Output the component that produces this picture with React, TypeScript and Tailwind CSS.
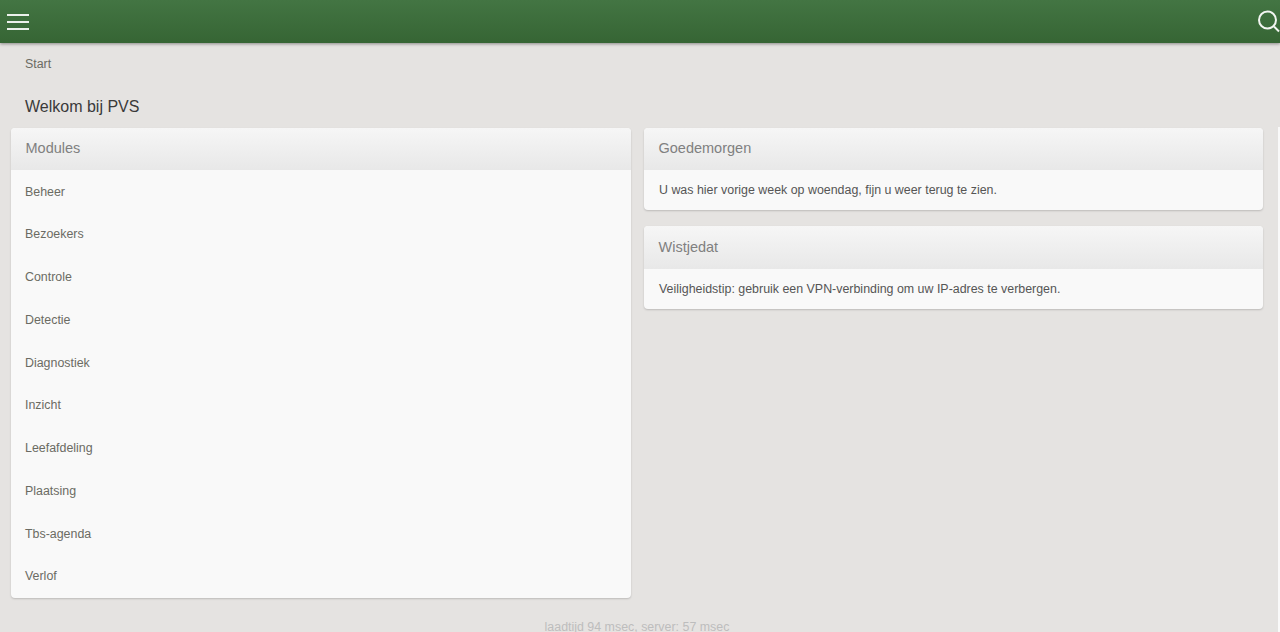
const modules = [
  'Beheer',
  'Bezoekers',
  'Controle',
  'Detectie',
  'Diagnostiek',
  'Inzicht',
  'Leefafdeling',
  'Plaatsing',
  'Tbs-agenda',
  'Verlof',
]

function Panel({ title, children }: { title: string; children: React.ReactNode }) {
  return (
    <div className="overflow-hidden rounded-[4px] bg-[#f9f9f9] shadow-[0_1px_2px_rgba(0,0,0,0.18)]">
      <div className="flex h-[42.5px] items-center bg-gradient-to-b from-[#f6f6f6] to-[#e8e8e8] px-[14.5px] pt-[1px] text-[14.5px] text-[#808080]">
        {title}
      </div>
      {children}
    </div>
  )
}

export default function App() {
  return (
    <div className="flex h-[632px] flex-col overflow-hidden bg-[#e5e3e1] font-['Liberation_Sans',Arial,sans-serif]">
      {/* Top bar */}
      <header className="flex h-[43px] shrink-0 items-center justify-between bg-gradient-to-b from-[#437543] to-[#366534] pl-[7px] shadow-[0_1px_3px_rgba(0,0,0,0.4)]">
        <div className="flex w-[22px] flex-col gap-[5px]">
          <span className="h-[2px] bg-white/90" />
          <span className="h-[2px] bg-white/90" />
          <span className="h-[2px] bg-white/90" />
        </div>
        <svg width="24" height="24" viewBox="0 0 24 24" fill="none" stroke="#f2f5f1" strokeWidth="2" className="mr-[-1px]">
          <circle cx="10.5" cy="10" r="8.5" />
          <path d="M17 16.5l5 5" />
        </svg>
      </header>

      <div className="flex min-h-0 flex-1">
        <div className="min-w-0 flex-1">
          <div className="pl-[25px] pt-[14px] text-[12.42px] leading-[14px] text-[#6b6b63]">Start</div>
          <h1 className="pl-[25px] pt-[26px] text-[16px] font-normal leading-[20px] text-[#3a3a3a]">Welkom bij PVS</h1>

          <div className="mt-[10.5px] flex items-start gap-[13px] pl-[11px] pr-[15px]">
            <div className="w-[620px] shrink-0">
              <Panel title="Modules">
                <ul>
                  {modules.map((m) => (
                    <li key={m} className="flex h-[42.75px] items-center px-[14px] pt-[1px] text-[12.42px] text-[#6b6b63]">
                      {m}
                    </li>
                  ))}
                </ul>
              </Panel>
            </div>
            <div className="flex min-w-0 flex-1 flex-col gap-[16px]">
              <Panel title="Goedemorgen">
                <div className="flex h-[40px] items-center px-[15px] pt-[1px] text-[12.42px] text-[#555]">
                  U was hier vorige week op woendag, fijn u weer terug te zien.
                </div>
              </Panel>
              <Panel title="Wistjedat">
                <div className="flex h-[40px] items-center px-[15px] pt-[1px] text-[12.42px] text-[#555]">
                  Veiligheidstip: gebruik een VPN-verbinding om uw IP-adres te verbergen.
                </div>
              </Panel>
            </div>
          </div>

          <div className="mt-[24.5px] pr-[4px] text-center text-[12.42px] leading-[10px] text-[#bdbdbd]">
            laadtijd 94 msec, server: 57 msec
          </div>
        </div>
        <div className="mt-[84px] w-[2px] shrink-0 bg-[#f9f9f9]" />
      </div>
    </div>
  )
}
